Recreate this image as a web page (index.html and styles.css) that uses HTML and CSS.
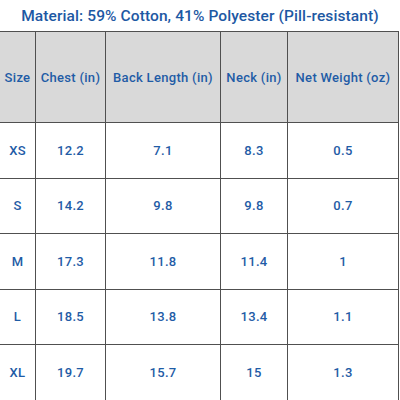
FILE: index.html
```html
<!DOCTYPE html>
<html lang="en">
<head>
    <meta charset="UTF-8">
    <title>Size Chart</title>
    <link rel="stylesheet" href="styles.css">
</head>
<body>
    <div class="title">Material: 59% Cotton, 41% Polyester (Pill-resistant)</div>
    <table class="chart">
        <colgroup>
            <col class="c-size">
            <col class="c-chest">
            <col class="c-back">
            <col class="c-neck">
            <col class="c-weight">
        </colgroup>
        <thead>
            <tr>
                <th>Size</th>
                <th>Chest (in)</th>
                <th>Back Length (in)</th>
                <th>Neck (in)</th>
                <th>Net Weight (oz)</th>
            </tr>
        </thead>
        <tbody>
            <tr><td>XS</td><td>12.2</td><td>7.1</td><td>8.3</td><td>0.5</td></tr>
            <tr><td>S</td><td>14.2</td><td>9.8</td><td>9.8</td><td>0.7</td></tr>
            <tr><td>M</td><td>17.3</td><td>11.8</td><td>11.4</td><td>1</td></tr>
            <tr><td>L</td><td>18.5</td><td>13.8</td><td>13.4</td><td>1.1</td></tr>
            <tr><td>XL</td><td>19.7</td><td>15.7</td><td>15</td><td>1.3</td></tr>
        </tbody>
    </table>
</body>
</html>
```

FILE: styles.css
```css
* {
    margin: 0;
    padding: 0;
    box-sizing: border-box;
}

body {
    font-family: Roboto, 'Liberation Sans', Arial, sans-serif;
    background-color: #ffffff;
    color: #1f5ca6;
    width: 400px;
    height: 400px;
    overflow: hidden;
}

.title {
    height: 31px;
    display: flex;
    align-items: center;
    justify-content: center;
    font-size: 15.5px;
    font-weight: 500;
    letter-spacing: 0.1px;
    color: #1d58a3;
}

.chart {
    width: 399px;
    margin-left: -1px;
    border-collapse: collapse;
    table-layout: fixed;
}

.c-size { width: 36px; }
.c-chest { width: 70px; }
.c-back { width: 115px; }
.c-neck { width: 67px; }
.c-weight { width: 111px; }

.chart th,
.chart td {
    border: 1px solid #505050;
    text-align: center;
    font-size: 13px;
    font-weight: 500;
    letter-spacing: 0.3px;
    color: #1f5ca6;
    white-space: nowrap;
}

.chart th {
    height: 91px;
    background-color: #d9d9d9;
}

.chart td {
    height: 55.5px;
}
```
